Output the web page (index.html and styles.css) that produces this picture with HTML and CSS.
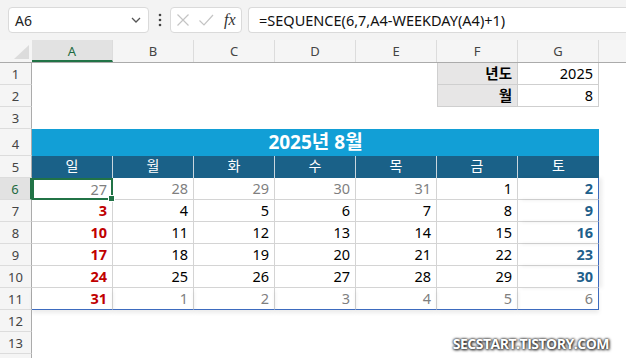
FILE: index.html
```html
<!DOCTYPE html>
<html lang="ko">
<head>
  <meta charset="UTF-8" />
  <title>SEQUENCE 달력</title>
  <link rel="stylesheet" href="styles.css">
</head>
<body>
  <div class="toolbar">
    <div class="namebox">
      <span>A6</span>
      <svg width="12" height="8" viewBox="0 0 12 8"><path d="M2 2 L6 6 L10 2" fill="none" stroke="#555" stroke-width="1.3"/></svg>
    </div>
    <svg class="dots" width="4" height="14" viewBox="0 0 4 14"><circle cx="2" cy="2" r="1.3" fill="#444"/><circle cx="2" cy="7" r="1.3" fill="#444"/><circle cx="2" cy="12" r="1.3" fill="#444"/></svg>
    <div class="fxbox">
      <svg width="14" height="14" viewBox="0 0 14 14"><path d="M1.5 1.5 L12.5 12.5 M12.5 1.5 L1.5 12.5" stroke="#c4c4c4" stroke-width="1.2"/></svg>
      <svg width="16" height="14" viewBox="0 0 16 14"><path d="M1.5 7.5 L6 12 L15 2" fill="none" stroke="#c4c4c4" stroke-width="1.2"/></svg>
      <i class="fx">fx</i>
    </div>
    <div class="formula">=SEQUENCE(6,7,A4-WEEKDAY(A4)+1)</div>
  </div>

  <div class="sheet">
    <div class="row colhead">
      <div class="corner"><svg width="16" height="14" viewBox="0 0 16 14"><path d="M15 0 L15 14 L0 14 Z" fill="#dcdcdc"/></svg></div>
      <div class="ch active">A</div>
      <div class="ch">B</div>
      <div class="ch">C</div>
      <div class="ch">D</div>
      <div class="ch">E</div>
      <div class="ch">F</div>
      <div class="ch">G</div>
      <div class="ch fill"></div>
    </div>

    <div class="row">
      <div class="rh">1</div>
      <div class="blank five"></div>
      <div class="c label">년도</div>
      <div class="c val">2025</div>
    </div>
    <div class="row">
      <div class="rh">2</div>
      <div class="blank five"></div>
      <div class="c label">월</div>
      <div class="c val">8</div>
    </div>
    <div class="row">
      <div class="rh">3</div>
    </div>
    <div class="row tall">
      <div class="rh">4</div>
      <div class="title">2025년 8월</div>
    </div>
    <div class="row">
      <div class="rh">5</div>
      <div class="c wd">일</div>
      <div class="c wd">월</div>
      <div class="c wd">화</div>
      <div class="c wd">수</div>
      <div class="c wd">목</div>
      <div class="c wd">금</div>
      <div class="c wd">토</div>
    </div>
    <div class="row">
      <div class="rh active">6</div>
      <div class="c d other selected">27</div>
      <div class="c d other">28</div>
      <div class="c d other">29</div>
      <div class="c d other">30</div>
      <div class="c d other">31</div>
      <div class="c d">1</div>
      <div class="c d sat last">2</div>
    </div>
    <div class="row">
      <div class="rh">7</div>
      <div class="c d sun">3</div>
      <div class="c d">4</div>
      <div class="c d">5</div>
      <div class="c d">6</div>
      <div class="c d">7</div>
      <div class="c d">8</div>
      <div class="c d sat last">9</div>
    </div>
    <div class="row">
      <div class="rh">8</div>
      <div class="c d sun">10</div>
      <div class="c d">11</div>
      <div class="c d">12</div>
      <div class="c d">13</div>
      <div class="c d">14</div>
      <div class="c d">15</div>
      <div class="c d sat last">16</div>
    </div>
    <div class="row">
      <div class="rh">9</div>
      <div class="c d sun">17</div>
      <div class="c d">18</div>
      <div class="c d">19</div>
      <div class="c d">20</div>
      <div class="c d">21</div>
      <div class="c d">22</div>
      <div class="c d sat last">23</div>
    </div>
    <div class="row">
      <div class="rh">10</div>
      <div class="c d sun">24</div>
      <div class="c d">25</div>
      <div class="c d">26</div>
      <div class="c d">27</div>
      <div class="c d">28</div>
      <div class="c d">29</div>
      <div class="c d sat last">30</div>
    </div>
    <div class="row spill-end">
      <div class="rh">11</div>
      <div class="c d sun">31</div>
      <div class="c d other">1</div>
      <div class="c d other">2</div>
      <div class="c d other">3</div>
      <div class="c d other">4</div>
      <div class="c d other">5</div>
      <div class="c d other last">6</div>
    </div>
    <div class="row">
      <div class="rh">12</div>
    </div>
    <div class="row">
      <div class="rh">13</div>
    </div>
    <div class="row stub">
      <div class="rh"></div>
    </div>
  </div>

  <div class="watermark">SECSTART.TISTORY.COM</div>
</body>
</html>
```

FILE: styles.css
```css
body {
  margin: 0;
  width: 626px;
  height: 358px;
  overflow: hidden;
  background: #fff;
  font-family: "Noto Sans", "Noto Sans CJK KR", sans-serif;
  color: #000;
  position: relative;
}
.toolbar {
  height: 40px;
  background: #f3f3f3;
  display: flex;
  align-items: center;
  padding-left: 8px;
  box-sizing: border-box;
}
.namebox {
  width: 141px;
  height: 26px;
  box-sizing: border-box;
  background: #fff;
  border: 1px solid #dadada;
  border-radius: 4px;
  display: flex;
  align-items: center;
  justify-content: space-between;
  padding: 0 6px 0 6px;
  font-size: 14px;
  color: #222;
}
.dots {
  margin: 0 8px 0 9px;
}
.fxbox {
  width: 72px;
  height: 26px;
  box-sizing: border-box;
  background: #fff;
  border: 1px solid #dadada;
  border-radius: 4px;
  display: flex;
  align-items: center;
  gap: 8px;
  padding-left: 5px;
}
.fx {
  font-family: "Liberation Serif", serif;
  font-size: 16px;
  color: #333;
  margin-left: 2px;
}
.formula {
  flex: 1;
  height: 26px;
  margin-left: 6px;
  box-sizing: border-box;
  background: #fff;
  border: 1px solid #dadada;
  border-right: none;
  border-radius: 4px 0 0 4px;
  padding-left: 10px;
  font-size: 14.5px;
  line-height: 24px;
  color: #111;
  white-space: nowrap;
}

.sheet {
  display: flex;
  flex-direction: column;
}
.row {
  display: flex;
  height: 22px;
}
.row.tall {
  height: 27px;
}
.row.stub {
  height: 5px;
}
.colhead {
  background: #f5f5f5;
  border-bottom: 1px solid #ababab;
  height: 22px;
}
.corner {
  width: 32px;
  box-sizing: border-box;
  display: flex;
  align-items: flex-end;
  justify-content: flex-end;
  padding: 0 2px 3px 0;
}
.ch {
  width: 81px;
  box-sizing: border-box;
  border-right: 1px solid #dcdcdc;
  text-align: center;
  font-size: 13px;
  line-height: 22px;
  color: #444;
}
.ch.active {
  background: #e2e2e2;
  color: #1e6b41;
  border-bottom: 2px solid #217346;
}
.ch.fill {
  flex: 1;
  border-right: none;
}
.rh {
  width: 32px;
  flex: none;
  box-sizing: border-box;
  background: #f5f5f5;
  border-right: 1px solid #ababab;
  border-bottom: 1px solid #dcdcdc;
  text-align: center;
  font-size: 13px;
  line-height: 22px;
  color: #444;
}
.tall .rh {
  line-height: 30px;
}
.stub .rh {
  border-bottom: none;
}
.rh.active {
  background: #e2e2e2;
  color: #1e6b41;
  border-right: 2px solid #217346;
}

.blank.five {
  width: 405px;
}
.c {
  width: 81px;
  flex: none;
  box-sizing: border-box;
  font-size: 14.5px;
  line-height: 21px;
  text-align: right;
  padding-right: 5px;
  white-space: nowrap;
}
.label {
  background: #e7e6e6;
  font-weight: bold;
  border: 1px solid #cfcfcf;
  border-top: none;
}
.val {
  border-right: 1px solid #cfcfcf;
  border-bottom: 1px solid #cfcfcf;
}

.title {
  width: 567px;
  background: #129fd6;
  color: #fff;
  font-weight: bold;
  font-size: 19px;
  text-align: center;
  line-height: 27px;
}
.wd {
  background: #1a6188;
  color: #fff;
  text-align: center;
  padding: 0;
  font-size: 14px;
  line-height: 19px;
  border-right: 1px solid #c9d6de;
}
.wd:last-child {
  border-right: none;
}

.d {
  border-right: 1px solid #d4d4d4;
  border-bottom: 1px solid #d4d4d4;
}
.d.last {
  border-right: 1px solid #3d6bbf;
  box-shadow: 3px 0 4px rgba(0, 0, 0, 0.08);
}
.spill-end .d {
  border-bottom: 1px solid #3d6bbf;
  box-shadow: 0 3px 4px rgba(0, 0, 0, 0.08);
}
.other {
  color: #7f7f7f;
}
.sun {
  color: #c00000;
  font-weight: bold;
}
.sat {
  color: #1f5f8b;
  font-weight: bold;
}
.selected {
  position: relative;
  border: 2px solid #217346;
  padding-right: 4px;
  line-height: 19px;
}
.selected::after {
  content: "";
  position: absolute;
  right: -4px;
  bottom: -4px;
  width: 5px;
  height: 5px;
  background: #217346;
  border: 1px solid #fff;
}

.watermark {
  position: absolute;
  right: 17px;
  bottom: 5px;
  font-family: "Open Sans", "Noto Sans", sans-serif;
  font-weight: bold;
  font-size: 14px;
  letter-spacing: -0.5px;
  color: #fff;
  text-shadow: 0 0 2px #333, 0 0 3px #333, 1px 1px 3px #222;
}
```
